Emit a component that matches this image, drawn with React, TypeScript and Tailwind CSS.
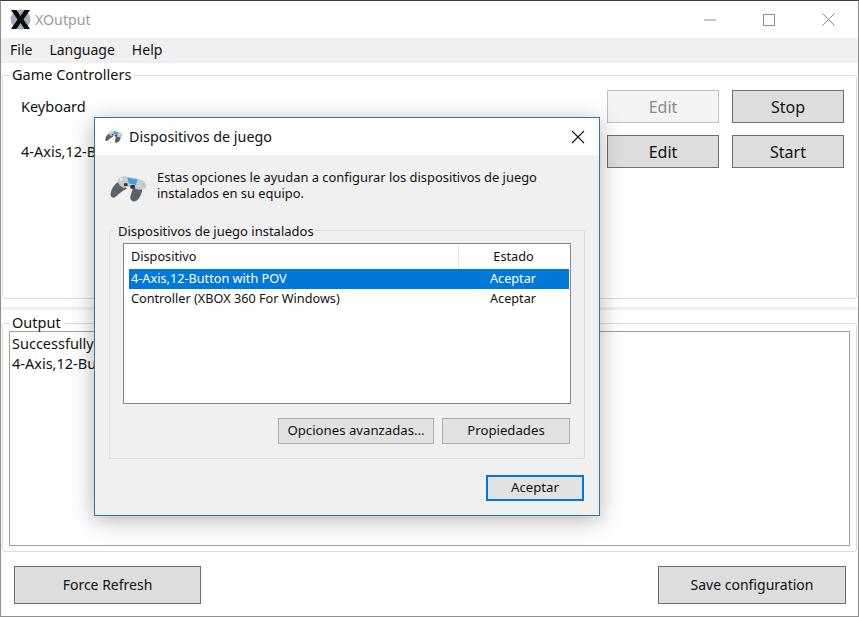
const font = "font-['Noto_Sans','Open_Sans',sans-serif]";

function GamepadIcon({ size }: { size: number }) {
  return (
    <svg width={size} height={size * 0.72} viewBox="0 0 40 29" className="shrink-0">
      <path d="M10 7 C5 9 1 15 0.5 21 C0.5 25 4 26 7 23 C10 20 14 17 18 15 L15 8 Z" fill="#5c6268" />
      <path d="M25 14 C24 18 22 22 22 25 C22 29 27 30 30 27 C33 24 35 19 35 15 Z" fill="#5c6268" />
      <path d="M8 5 C12 1 16 1 20 2 L33 5 C38 7 40 10 39 13 C38 16 33 17 28 15 L22 13 L15 14 C11 13 8 9 8 5 Z" fill="#c8ccd0" />
      <path d="M19 3 L30 5 L28 11 L20 9 Z" fill="#3f9fe8" />
      <circle cx="12" cy="5" r="1.5" fill="#f2f2f2" />
      <rect x="15" y="9" width="4" height="3" fill="#34383c" />
      <rect x="22" y="11" width="5" height="4" rx="1" fill="#34383c" />
      <circle cx="36" cy="10" r="1.2" fill="#b9c48c" />
    </svg>
  );
}

function Button({ label, disabled, className }: { label: string; disabled?: boolean; className?: string }) {
  return (
    <button
      className={`border leading-none ${
        disabled ? "border-[#bfbfbf] bg-[#f4f4f4] text-[#8a8a8a]" : "border-[#707070] bg-[#dddddd] text-[#111]"
      } ${className ?? ""}`}
    >
      {label}
    </button>
  );
}

function ControllerRow({ name, label, editDisabled }: { name: string; label: string; editDisabled?: boolean }) {
  return (
    <div className="flex h-[33px] items-center">
      <span className="flex-1 text-[14.5px]">{name}</span>
      <Button label="Edit" disabled={editDisabled} className="h-[33px] w-[112px] text-[16px]" />
      <Button label={label} className="ml-[13px] h-[33px] w-[112px] text-[16px]" />
    </div>
  );
}

function Dialog() {
  return (
    <div className="absolute left-[94px] top-[117px] flex h-[399px] w-[506px] flex-col border border-[#2b78ab] bg-[#f0f0f0] shadow-[0_4px_22px_rgba(0,0,0,0.3)]">
      <div className="flex h-[37px] shrink-0 items-center bg-white pl-[10px] text-[14.3px] text-[#111]">
        <GamepadIcon size={18} />
        <span className="ml-[6px] flex-1">Dispositivos de juego</span>
        <svg width="14" height="14" viewBox="0 0 14 14" className="mr-[14px]">
          <path d="M1 1 L13 13 M13 1 L1 13" stroke="#111" strokeWidth="1.1" />
        </svg>
      </div>
      <div className="flex items-center pl-[15px] pt-[14px]">
        <span className="mt-[6px]">
          <GamepadIcon size={37} />
        </span>
        <p className="ml-[10px] text-[12.9px] leading-[16px] text-[#111]">
          Estas opciones le ayudan a configurar los dispositivos de juego
          <br />
          instalados en su equipo.
        </p>
      </div>
      <fieldset className="mx-[14px] mt-[17px] h-[240px] rounded-[2px] border border-[#dcdcdc] px-[13px] pb-[14px]">
        <legend className="ml-[-6px] px-[1px] text-[13px] leading-[24px] text-[#111]">
          Dispositivos de juego instalados
        </legend>
        <div className="h-[161px] border border-[#828790] bg-white p-[1px] text-[12.7px] text-[#111]">
          <div className="flex h-[24px] items-center">
            <span className="w-[333px] pl-[6px]">Dispositivo</span>
            <span className="flex h-full flex-1 items-center justify-center border-l border-[#e5e5e5] pr-[1px]">Estado</span>
          </div>
          <div className="ml-[4px] flex h-[20px] items-center bg-[#0078d7] text-white">
            <span className="w-[328px] pl-[2px]">4-Axis,12-Button with POV</span>
            <span className="flex-1 text-center">Aceptar</span>
          </div>
          <div className="ml-[4px] flex h-[20px] items-center">
            <span className="w-[328px] pl-[2px]">Controller (XBOX 360 For Windows)</span>
            <span className="flex-1 text-center">Aceptar</span>
          </div>
        </div>
        <div className="mt-[14px] flex justify-end gap-[8px] pr-[1px] text-[13.2px] text-[#111]">
          <button className="h-[26px] w-[156px] border border-[#adadad] bg-[#e1e1e1]">Opciones avanzadas...</button>
          <button className="h-[26px] w-[128px] border border-[#adadad] bg-[#e1e1e1]">Propiedades</button>
        </div>
      </fieldset>
      <div className="mt-[16px] flex justify-end pr-[15px]">
        <button className="h-[26px] w-[98px] border-2 border-[#0078d7] bg-[#e1e1e1] text-[13.2px] text-[#111]">Aceptar</button>
      </div>
    </div>
  );
}

export default function App() {
  return (
    <div className={`relative h-[617px] w-[859px] overflow-hidden bg-white text-[#111] ${font}`}>
      <div className="flex h-full flex-col border border-[#8f8f8f] border-t-[#3c3c3c]">
        {/* title bar */}
        <div className="flex h-[37px] shrink-0 items-center pl-[9px]">
          <svg width="21" height="21" viewBox="0 0 21 21">
            <circle cx="10.5" cy="10.5" r="10" fill="#a3b1be" />
            <path d="M1 1 H6.5 L10.5 7 L14.5 1 H20 L13.5 10.5 L20 20 H14.5 L10.5 14 L6.5 20 H1 L7.5 10.5 Z" fill="#0b0b0b" />
          </svg>
          <span className="ml-[4px] flex-1 text-[14.2px] text-[#9a9a9a]">XOutput</span>
          <svg width="12" height="2" viewBox="0 0 12 2" className="mr-[47px]">
            <path d="M0 1 H12" stroke="#8c8c8c" strokeWidth="1" />
          </svg>
          <svg width="12" height="12" viewBox="0 0 12 12" className="mr-[47px]">
            <rect x="0.5" y="0.5" width="11" height="11" fill="none" stroke="#8c8c8c" />
          </svg>
          <svg width="13" height="13" viewBox="0 0 13 13" className="mr-[23px]">
            <path d="M0.5 0.5 L12.5 12.5 M12.5 0.5 L0.5 12.5" stroke="#8c8c8c" strokeWidth="1" />
          </svg>
        </div>
        {/* menu */}
        <div className="flex h-[25px] shrink-0 items-center gap-[17px] bg-[#f0f0f0] pb-[2px] pl-[9px] text-[14px]">
          <span>File</span>
          <span>Language</span>
          <span>Help</span>
        </div>
        {/* game controllers */}
        <fieldset className="mx-px mt-px h-[235px] shrink-0 rounded-[3px] border border-[#dcdcdc] pl-[18px] pr-[12px]">
          <legend className="ml-[-12px] -translate-y-px px-[3px] text-[14.5px] leading-[22px]">Game Controllers</legend>
          <div className="mt-[4px] flex flex-col gap-[12px]">
            <ControllerRow name="Keyboard" label="Stop" editDisabled />
            <ControllerRow name="4-Axis,12-Button with POV" label="Start" />
          </div>
        </fieldset>
        <div className="mt-[8px] h-[3px] shrink-0 bg-[#f0f0f0]" />
        {/* output */}
        <fieldset className="mx-px mt-[5px] h-[237px] shrink-0 rounded-[3px] border border-[#dcdcdc] px-[6px] pb-[4px]">
          <legend className="ml-0 -translate-y-px px-[3px] text-[14.5px] leading-[16px]">Output</legend>
          <div className="h-[215px] border border-[#a0a0a0] px-[2px] pt-px text-[14.5px] leading-[20px]">
            <p>Successfully connected to the device</p>
            <p>4-Axis,12-Button with POV</p>
          </div>
        </fieldset>
        {/* footer */}
        <div className="flex flex-1 items-start justify-between pl-[13px] pr-[12px] pt-[14px]">
          <Button label="Force Refresh" className="h-[38px] w-[187px] text-[14px]" />
          <Button label="Save configuration" className="h-[38px] w-[188px] text-[14px]" />
        </div>
      </div>
      <Dialog />
    </div>
  );
}
